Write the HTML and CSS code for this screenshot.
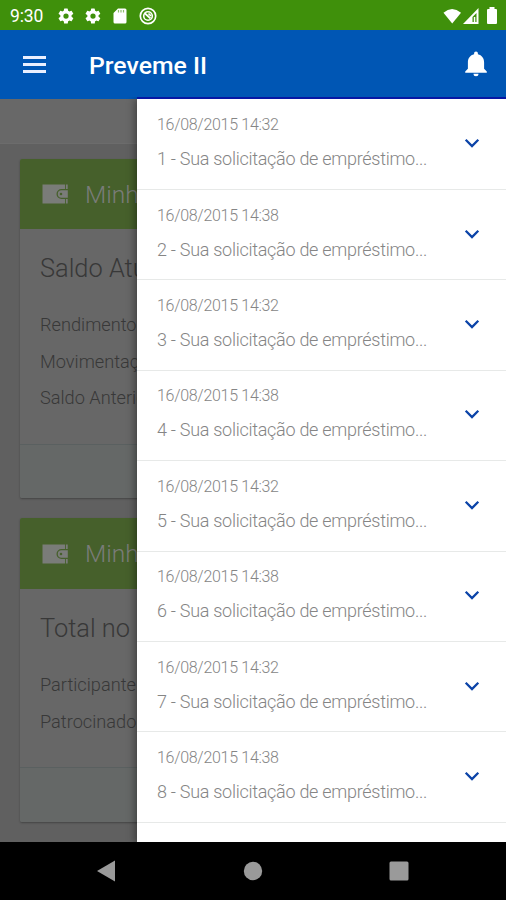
FILE: index.html
```
<!DOCTYPE html>
<html lang="pt-BR">
<head>
<meta charset="utf-8">
<title>Preveme II</title>
<link rel="stylesheet" href="styles.css">
</head>
<body>
<svg class="defs" width="0" height="0" aria-hidden="true">
  <symbol id="gear" viewBox="0 0 24 24"><path d="M19.4 13a7.500 7.500 0 0 0 0-2l2.100-1.600a.5.5 0 0 0 .1-.7l-2-3.400a.5.5 0 0 0-.6-.2l-2.500 1a7.300 7.300 0 0 0-1.700-1l-.4-2.600a.5.5 0 0 0-.5-.5h-4a.5.5 0 0 0-.5.5L9 5.100a7.700 7.700 0 0 0-1.700 1l-2.500-1a.5.5 0 0 0-.6.2l-2 3.400a.5.5 0 0 0 .1.700L4.500 11a8 8 0 0 0 0 2l-2.200 1.600a.5.5 0 0 0-.1.700l2 3.400c.1.200.4.300.6.200l2.500-1a7.300 7.300 0 0 0 1.700 1l.4 2.600c0 .3.200.5.500.5h4c.3 0 .5-.2.500-.5l.4-2.600a7.700 7.700 0 0 0 1.700-1l2.500 1c.2.100.5 0 .6-.2l2-3.400a.5.5 0 0 0-.1-.7zM12 15.500a3.500 3.500 0 1 1 0-7 3.500 3.500 0 0 1 0 7z" fill="currentColor" fill-rule="evenodd"/></symbol>
  <symbol id="wallet" viewBox="0 0 28 20"><path d="M1.500 .5H24V5H20.500a5 5 0 0 0 0 10H24v4.500H1.500z" fill="currentColor"/><path d="M26.800 6.300h-6.300a3.700 3.700 0 0 0 0 7.400h6.300zM20 8.700a1.300 1.300 0 1 1 0 2.600A1.300 1.300 0 0 1 20 8.700z" fill="currentColor" fill-rule="evenodd"/><path d="M25.800 .5v4.500M25.800 15v4.500" stroke="currentColor" stroke-width="1.800"/></symbol>
  <symbol id="chevron" viewBox="0 0 16 10"><path d="M1.700 1.700 8 8l6.300-6.300" fill="none" stroke="currentColor" stroke-width="2.300"/></symbol>
</svg>
<div class="screen">
  <div class="status">
    <span class="clock">9:30</span>
    <svg class="s-gear" viewBox="0 0 24 24"><use href="#gear"/></svg>
    <svg class="s-gear" viewBox="0 0 24 24"><use href="#gear"/></svg>
    <svg class="s-card" viewBox="0 0 14 16"><path d="M5 .5h7a1.500 1.500 0 0 1 1.500 1.500v12a1.500 1.500 0 0 1-1.500 1.500H2A1.500 1.500 0 0 1 .5 14V5z" fill="#fff"/><path d="M5.500 2v2.500M8 2v2.500M10.500 2v2.500" stroke="#8dbd6c" stroke-width="1.200"/></svg>
    <svg class="s-radar" viewBox="0 0 18 18"><circle cx="9" cy="9" r="7.700" fill="none" stroke="#fff" stroke-width="1.700"/><circle cx="9" cy="9" r="4.300" fill="none" stroke="#fff" stroke-width="1.600"/><path d="M5.500 6l6 5.500M9.500 6.500 12 9" stroke="#fff" stroke-width="1.700"/></svg>
    <span class="grow"></span>
    <svg class="s-wifi" viewBox="0 0 20 16"><path d="M.5 4.500Q9.500-3 19 4.500L9.700 15.800z" fill="#fff"/></svg>
    <svg class="s-signal" viewBox="0 0 16 16"><path fill-rule="evenodd" d="M0 16 15.500 0v16zM9.500 9v5h4V5z" fill="#fff"/><path d="M10.800 9h1.500v5h-1.500z" fill="#fff"/></svg>
    <svg class="s-battery" viewBox="0 0 12 17"><path d="M3.500 0h5v2H10a1 1 0 0 1 1 1v13a1 1 0 0 1-1 1H2a1 1 0 0 1-1-1V3a1 1 0 0 1 1-1h1.500z" fill="#fff"/></svg>
  </div>
  <div class="appbar">
    <div class="menu"><i></i><i></i><i></i></div>
    <h1>Preveme II</h1>
    <span class="grow"></span>
    <svg class="bell" viewBox="0 0 22 26"><path d="M11 .5c1.200 0 1.900.9 1.900 2v.7c4 .9 6.200 4.200 6.200 8.200v6.400l2.700 2.700v1.300H.2v-1.300l2.700-2.700v-6.400c0-4 2.200-7.300 6.200-8.200v-.7c0-1.100.7-2 1.900-2zM8.500 22.800h5a2.500 2.500 0 0 1-5 0z" fill="#fff"/></svg>
  </div>
  <div class="stage">
    <main class="page">
      <div class="strip"></div>
      <section class="card first">
        <header><svg class="wallet" viewBox="0 0 28 20"><use href="#wallet"/></svg><span>Minha</span></header>
        <div class="body">
          <h2>Saldo Atual</h2>
          <p>Rendimento</p>
          <p>Movimentação</p>
          <p>Saldo Anterior</p>
        </div>
        <footer></footer>
      </section>
      <section class="card second">
        <header><svg class="wallet" viewBox="0 0 28 20"><use href="#wallet"/></svg><span>Minha</span></header>
        <div class="body">
          <h2>Total no</h2>
          <p>Participante</p>
          <p>Patrocinador</p>
        </div>
        <footer></footer>
      </section>
    </main>
    <aside class="drawer">
      <div class="item"><div class="text"><time>16/08/2015 14:32</time><p>1 - Sua solicitação de empréstimo...</p></div><svg class="chev" viewBox="0 0 16 10"><use href="#chevron"/></svg></div>
      <div class="item"><div class="text"><time>16/08/2015 14:38</time><p>2 - Sua solicitação de empréstimo...</p></div><svg class="chev" viewBox="0 0 16 10"><use href="#chevron"/></svg></div>
      <div class="item"><div class="text"><time>16/08/2015 14:32</time><p>3 - Sua solicitação de empréstimo...</p></div><svg class="chev" viewBox="0 0 16 10"><use href="#chevron"/></svg></div>
      <div class="item"><div class="text"><time>16/08/2015 14:38</time><p>4 - Sua solicitação de empréstimo...</p></div><svg class="chev" viewBox="0 0 16 10"><use href="#chevron"/></svg></div>
      <div class="item"><div class="text"><time>16/08/2015 14:32</time><p>5 - Sua solicitação de empréstimo...</p></div><svg class="chev" viewBox="0 0 16 10"><use href="#chevron"/></svg></div>
      <div class="item"><div class="text"><time>16/08/2015 14:38</time><p>6 - Sua solicitação de empréstimo...</p></div><svg class="chev" viewBox="0 0 16 10"><use href="#chevron"/></svg></div>
      <div class="item"><div class="text"><time>16/08/2015 14:32</time><p>7 - Sua solicitação de empréstimo...</p></div><svg class="chev" viewBox="0 0 16 10"><use href="#chevron"/></svg></div>
      <div class="item"><div class="text"><time>16/08/2015 14:38</time><p>8 - Sua solicitação de empréstimo...</p></div><svg class="chev" viewBox="0 0 16 10"><use href="#chevron"/></svg></div>
    </aside>
  </div>
  <nav class="nav">
    <svg viewBox="0 0 20 22"><path d="M19 .5v21L1 11z" fill="#9a9a9a"/></svg>
    <svg viewBox="0 0 20 22"><circle cx="10" cy="11" r="9.200" fill="#9a9a9a"/></svg>
    <svg viewBox="0 0 20 22"><rect x=".5" y="1.500" width="19" height="19" rx="1.500" fill="#9a9a9a"/></svg>
  </nav>
</div>
</body>
</html>
```

FILE: styles.css
```
* { box-sizing: border-box; margin: 0; padding: 0; }

body {
  width: 506px;
  height: 900px;
  overflow: hidden;
  font-family: Roboto, "Liberation Sans", sans-serif;
  font-weight: 300;
}

svg { display: block; flex: none; }
.defs { position: absolute; }
.grow { flex: 1; }

.screen { display: flex; flex-direction: column; height: 900px; }

.status {
  display: flex;
  align-items: center;
  height: 30px;
  padding: 1px 8px 0 10px;
  background: #3f900b;
  color: #fff;
}
.clock { width: 47px; font-size: 17.5px; font-weight: 400; letter-spacing: -.1px; }
.s-gear { width: 18px; height: 18px; margin-right: 9px; }
.s-card { width: 14px; height: 16px; margin-left: 2px; }
.s-radar { width: 18px; height: 18px; margin-left: 12px; }
.s-wifi { width: 19px; height: 16px; }
.s-signal { width: 16px; height: 16px; margin: 0 7px 0 1px; }
.s-battery { width: 12px; height: 17px; }

.appbar {
  display: flex;
  align-items: center;
  height: 69px;
  padding: 0 19px 0 23px;
  background: #0056b4;
  color: #fff;
}
.menu { display: flex; flex-direction: column; gap: 4px; width: 66px; }
.menu i { width: 23px; height: 3px; background: #e9efff; }
.appbar h1 { font-size: 24.8px; font-weight: 500; line-height: 30px; padding-top: 2px; }
.bell { width: 22px; height: 26px; margin-top: -1px; }

.stage { position: relative; height: 743px; }

.page { height: 100%; overflow: hidden; background: #606060; }
.strip { height: 45px; background: #686868; border-bottom: 1px solid #6c6c6c; }
.card {
  margin: 15px 20px 0;
  border-radius: 2px;
  background: #676767;
  box-shadow: 0 1px 2px rgba(0, 0, 0, .3);
  color: #383838;
}
.card header {
  display: flex;
  align-items: center;
  height: 70px;
  padding-left: 21px;
  gap: 16px;
  border-radius: 2px 2px 0 0;
  background: #46602b;
  color: #7a7c79;
  font-size: 24.5px;
}
.wallet { width: 28px; height: 20px; }
.card .body { height: 215px; padding: 23px 20px 0; white-space: nowrap; }
.card h2 { font-size: 25.4px; font-weight: 300; line-height: 32px; margin-bottom: 23px; }
.card p { font-size: 18.2px; line-height: 36.5px; }
.card footer { height: 54px; background: #656867; border-top: 1px solid #5a6060; border-radius: 0 0 2px 2px; }
.card.second { margin-top: 20px; }
.card.second header { height: 71px; }
.card.second .body { height: 178px; }
.card.second footer { height: 55px; }

.drawer {
  position: absolute;
  top: -2px;
  right: 0;
  bottom: 0;
  width: 369px;
  padding-top: .6px;
  border-top: 2px solid #0717a4;
  background: #fff;
  box-shadow: -2px 2px 8px rgba(0, 0, 0, .4);
  clip-path: inset(0 0 0 -12px);
}
.item {
  display: flex;
  align-items: center;
  justify-content: space-between;
  height: 90.4px;
  padding: 0 26px 0 20px;
  border-bottom: 1px solid #e7e9e8;
  color: #858585;
}
.item time { display: block; font-size: 16px; letter-spacing: -.3px; line-height: 20px; margin-bottom: 12px; }
.item p { font-size: 18px; letter-spacing: -.28px; line-height: 24px; white-space: nowrap; }
.item .text { margin-top: -2px; }
.chev { width: 16px; height: 10px; color: #0b43a8; margin-top: -2px; }

.nav {
  display: flex;
  align-items: center;
  justify-content: space-between;
  height: 58px;
  padding: 0 97px 0 96px;
  background: #000;
}
.nav svg { width: 20px; height: 22px; }
```
